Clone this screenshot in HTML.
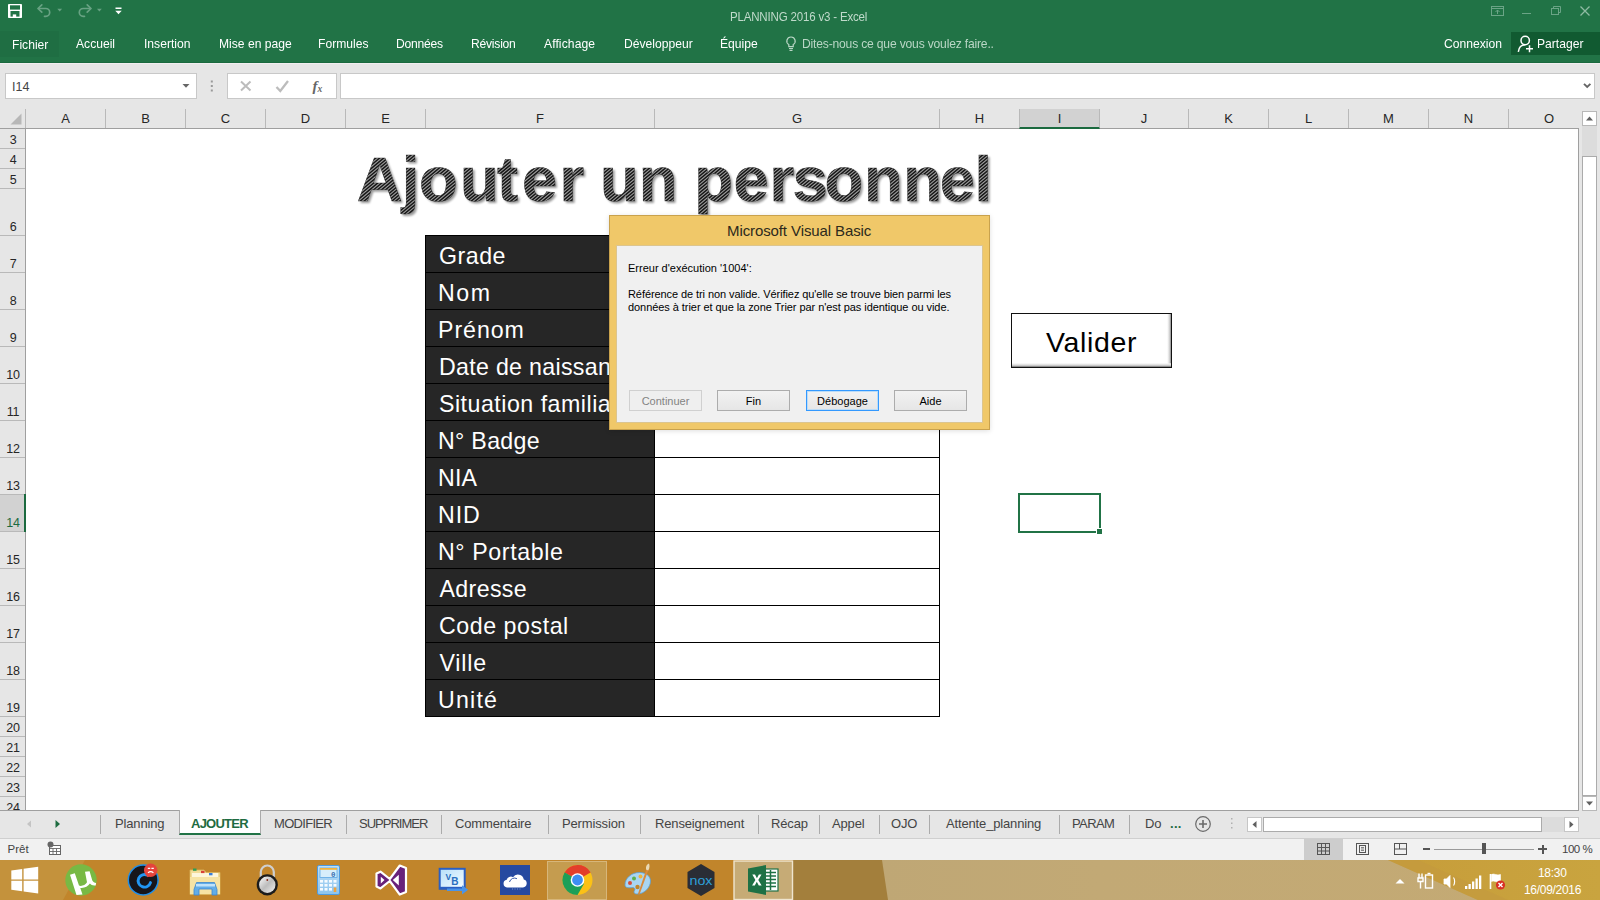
<!DOCTYPE html>
<html lang="fr">
<head>
<meta charset="utf-8">
<title>PLANNING 2016 v3 - Excel</title>
<style>
*{box-sizing:border-box;margin:0;padding:0}
html,body{width:1600px;height:900px;overflow:hidden;background:#fff}
body{position:relative;font-family:"Liberation Sans",sans-serif;font-size:12px;color:#262626}
.abs{position:absolute}
.t{position:absolute;white-space:nowrap;line-height:1}
/* ---------- title / ribbon ---------- */
#green{left:0;top:0;width:1600px;height:63px;background:#217346;border-bottom:1px solid #1b6a3f;z-index:2}
#green .t{color:#fff;font-size:13.1px;letter-spacing:0;transform:scaleX(0.925);transform-origin:0 0}
#title{left:730px;top:11px;color:#c0dacb!important;letter-spacing:-0.4px}
.rt{top:37px}
#fichier{left:0;top:31px;width:59px;height:26px;background:#1f6e43}
#share{left:1511px;top:32px;width:89px;height:23px;background:#115a31}
/* ---------- formula bar ---------- */
#fbar{left:0;top:62px;width:1600px;height:66px;background:#e6e6e6}
.box{position:absolute;background:#fff;border:1px solid #c8c8c8}
/* ---------- headers ---------- */
#colhead{left:0;top:108px;width:1579px;height:21px;border-bottom:1px solid #9f9f9f}
.ch{position:absolute;top:1px;height:19px;border-right:1px solid #b9b9b9;text-align:center;font-size:13px;line-height:19px;color:#262626}
#rowhead{left:0;top:129px;width:26px;height:682px;background:#e6e6e6;border-right:1px solid #9f9f9f;border-bottom:1px solid #9f9f9f;overflow:hidden}
.rh{position:absolute;left:0;width:26px;border-bottom:1px solid #b9b9b9;text-align:center;font-size:12.5px;letter-spacing:-0.3px;color:#262626}
.rh span{position:absolute;left:0;right:0;bottom:1px;line-height:14px;text-align:center}
/* ---------- sheet ---------- */
#sheet{left:26px;top:129px;width:1553px;height:682px;background:#fff;border-right:1px solid #9f9f9f;border-bottom:1px solid #9f9f9f;overflow:hidden}
.lab{position:absolute;left:425px;width:230px;height:38px;background:#262626;border:1px solid #000;color:#fff;font-size:23.2px;line-height:37px;padding:2px 0 0 13px;white-space:nowrap;overflow:hidden;letter-spacing:0.5px}
.val{position:absolute;left:654px;width:286px;height:38px;background:#fff;border:1px solid #000}
/* ---------- dialog ---------- */
#dlg{left:609px;top:215px;width:381px;height:215px;background:#f0c869;border:1px solid #c9a24d;box-shadow:0 1px 5px rgba(0,0,0,.13)}
#dlgin{left:6px;top:29px;width:367px;height:178px;background:#f0f0f0;border:1px solid #dcc58f}
#dlg .t{font-size:11px;color:#000}
.btn{position:absolute;top:144px;width:73px;height:21px;border:1px solid #acacac;background:linear-gradient(#f2f2f2,#e6e6e6);font-size:11px;text-align:center;line-height:19px;padding-top:1px;color:#000}
/* ---------- bottom ---------- */
#tabs{left:0;top:811px;width:1600px;height:28px;background:#e6e6e6;border-bottom:1px solid #cfcfcf}
#tabs .t{font-size:13px;top:6px;color:#444;letter-spacing:-0.15px}
.sep{position:absolute;top:4px;width:1px;height:19px;background:#ababab}
#status{left:0;top:839px;width:1600px;height:21px;background:#f1f1f1}
#task{left:0;top:860px;width:1600px;height:40px;background:#c1842a;overflow:hidden}
</style>
</head>
<body>
<!-- TITLE + RIBBON TABS -->
<div id="green" class="abs">
<!-- quick access toolbar -->
<svg class="abs" style="left:0;top:0" width="260" height="30" viewBox="0 0 260 30">
 <rect x="8" y="4" width="14" height="14" rx="0.800" fill="#fff"/>
 <rect x="10" y="5.300" width="10" height="4.300" fill="#217346"/>
 <rect x="10.500" y="11" width="9" height="5.600" fill="#217346"/>
 <rect x="12.800" y="14.400" width="3.400" height="2.600" fill="#fff"/>
 <g fill="none" stroke="#68a283" stroke-width="1.700" stroke-linecap="round" stroke-linejoin="round">
  <path d="M38.500 8.500h7.300a3.900 3.900 0 0 1 0 7.800h-1.300"/>
  <path d="M41.800 4.800l-3.800 3.700 3.800 3.700"/>
  <path d="M90.500 8.500h-7.300a3.900 3.900 0 0 0 0 7.800h1.300"/>
  <path d="M87.200 4.800l3.800 3.700-3.800 3.700"/>
 </g>
 <path d="M57.300 8.800h4.800l-2.400 2.700z" fill="#68a283"/>
 <path d="M97 8.800h4.800l-2.400 2.700z" fill="#68a283"/>
 <rect x="115.500" y="7.500" width="6" height="1.500" fill="#fff"/>
 <path d="M115.300 10.800h6.400l-3.200 3.400z" fill="#fff"/>
</svg>
<div class="t" id="title" style="font-size:12.800px;letter-spacing:-0.2px;transform:scaleX(0.9)">PLANNING 2016 v3 - Excel</div>
<!-- window controls -->
<svg class="abs" style="left:1485px;top:0" width="115" height="24" viewBox="0 0 115 24">
 <g fill="none" stroke="#6ba486" stroke-width="1">
  <rect x="6.500" y="6.500" width="12" height="9"/>
  <path d="M6.500 8.500h12M12.500 14v-4M10.500 12l2-2 2 2"/>
  <path d="M37 13.500h9"/>
  <rect x="66.500" y="8.500" width="7" height="6"/>
  <path d="M68.500 8.500v-2h7v6h-2"/>
 </g>
 <path d="M95.500 6.500l9 9M104.500 6.500l-9 9" stroke="#8fbba3" stroke-width="1.300" fill="none"/>
</svg>
<!-- ribbon tabs -->
<div id="fichier" class="abs"></div>
<div class="t" style="left:12px;top:38px">Fichier</div>
<div class="t rt" style="left:76px">Accueil</div>
<div class="t rt" style="left:144px">Insertion</div>
<div class="t rt" style="left:219px">Mise en page</div>
<div class="t rt" style="left:318px">Formules</div>
<div class="t rt" style="left:396px;letter-spacing:-0.25px">Données</div>
<div class="t rt" style="left:471px;letter-spacing:-0.25px">Révision</div>
<div class="t rt" style="left:544px;letter-spacing:0.1px">Affichage</div>
<div class="t rt" style="left:624px">Développeur</div>
<div class="t rt" style="left:720px">Équipe</div>
<svg class="abs" style="left:784px;top:35px" width="14" height="18" viewBox="0 0 14 18">
 <path d="M7 2a4.100 4.100 0 0 1 2.200 7.600v2.100H4.800V9.600A4.100 4.100 0 0 1 7 2z" fill="none" stroke="#b9d6c5" stroke-width="1.200"/>
 <path d="M5 13.500h4M5.500 15.300h3" stroke="#b9d6c5" stroke-width="1.200"/>
</svg>
<div class="t rt" style="left:802px;color:#b9d6c5;letter-spacing:-0.2px">Dites-nous ce que vous voulez faire..</div>
<div class="t rt" style="left:1444px">Connexion</div>
<div id="share" class="abs"></div>
<svg class="abs" style="left:1516px;top:33px" width="20" height="22" viewBox="0 0 20 22">
 <g fill="none" stroke="#fff" stroke-width="1.500">
  <circle cx="9.200" cy="7.500" r="4.200"/>
  <path d="M2.300 18.800c.6-4.600 3.400-7.100 6.900-7.100"/>
  <path d="M10 15.800h7M13.500 12.300v7"/>
 </g>
</svg>
<div class="t rt" style="left:1537px">Partager</div>
</div>
<!-- FORMULA BAR -->
<div id="fbar" class="abs">
<div class="abs" style="left:0;top:1px;width:1600px;height:1px;background:#f2eef0"></div>
<div class="box" style="left:5px;top:11px;width:192px;height:26px"></div>
<div class="t" style="left:12px;top:19px;font-size:12.500px;color:#444">I14</div>
<svg class="abs" style="left:180px;top:20px" width="12" height="8" viewBox="0 0 12 8"><path d="M2.500 2h7L6 5.800z" fill="#666"/></svg>
<svg class="abs" style="left:208px;top:17px" width="6" height="16" viewBox="0 0 6 16"><g fill="#9a9a9a"><rect x="2.800" y="1.500" width="2" height="2"/><rect x="2.800" y="6" width="2" height="2"/><rect x="2.800" y="10.500" width="2" height="2"/></g></svg>
<div class="box" style="left:227px;top:11px;width:110px;height:26px"></div>
<svg class="abs" style="left:227px;top:11px" width="110" height="26" viewBox="0 0 110 26">
 <path d="M14 8.500l9.500 9M23.500 8.500l-9.500 9" stroke="#bcbcbc" stroke-width="2" fill="none"/>
 <path d="M49.500 14l3.800 4 7.700-10" stroke="#bcbcbc" stroke-width="2.300" fill="none"/>
 <text x="85.500" y="18" font-family="Liberation Serif,serif" font-style="italic" font-weight="bold" font-size="15" fill="#666">f</text>
 <text x="90.500" y="18.500" font-family="Liberation Serif,serif" font-style="italic" font-weight="bold" font-size="9.500" fill="#666">x</text>
</svg>
<div class="box" style="left:340px;top:11px;width:1255px;height:26px"></div>
<svg class="abs" style="left:1580.500px;top:19px" width="12" height="10" viewBox="0 0 12 10"><path d="M3 2.800l3.200 3.200 3.200-3.200" stroke="#666" stroke-width="1.900" fill="none"/></svg>
</div>
<div id="colhead" class="abs">
<svg class="abs" style="left:9px;top:4px" width="14" height="14" viewBox="0 0 14 14"><path d="M12.500 1.500v11h-11z" fill="#b7b7b7"/></svg>
<div class="ch" style="left:0;width:26px"></div>
<div class="ch" style="left:26px;width:80px">A</div>
<div class="ch" style="left:106px;width:80px">B</div>
<div class="ch" style="left:186px;width:80px">C</div>
<div class="ch" style="left:266px;width:80px">D</div>
<div class="ch" style="left:346px;width:80px">E</div>
<div class="ch" style="left:426px;width:229px">F</div>
<div class="ch" style="left:655px;width:285px">G</div>
<div class="ch" style="left:940px;width:80px">H</div>
<div class="ch" style="left:1019px;width:81px;background:#d2d2d2;border-bottom:2px solid #1b6a3f;height:20px;border-left:1px solid #b9b9b9">I</div>
<div class="ch" style="left:1100px;width:89px">J</div>
<div class="ch" style="left:1189px;width:80px">K</div>
<div class="ch" style="left:1269px;width:80px">L</div>
<div class="ch" style="left:1349px;width:80px">M</div>
<div class="ch" style="left:1429px;width:80px">N</div>
<div class="ch" style="left:1509px;width:80px;border-right:none">O</div>
</div>
<div id="rowhead" class="abs">
<div class="rh" style="top:0px;height:20px"><span>3</span></div>
<div class="rh" style="top:20px;height:20px"><span>4</span></div>
<div class="rh" style="top:40px;height:20px"><span>5</span></div>
<div class="rh" style="top:60px;height:47px"><span>6</span></div>
<div class="rh" style="top:107px;height:37px"><span>7</span></div>
<div class="rh" style="top:144px;height:37px"><span>8</span></div>
<div class="rh" style="top:181px;height:37px"><span>9</span></div>
<div class="rh" style="top:218px;height:37px"><span>10</span></div>
<div class="rh" style="top:255px;height:37px"><span>11</span></div>
<div class="rh" style="top:292px;height:37px"><span>12</span></div>
<div class="rh" style="top:329px;height:37px"><span>13</span></div>
<div class="rh" style="top:366px;height:37px;background:#d2d2d2;color:#1b6a3f"><span>14</span></div>
<div class="rh" style="top:403px;height:37px"><span>15</span></div>
<div class="rh" style="top:440px;height:37px"><span>16</span></div>
<div class="rh" style="top:477px;height:37px"><span>17</span></div>
<div class="rh" style="top:514px;height:37px"><span>18</span></div>
<div class="rh" style="top:551px;height:37px"><span>19</span></div>
<div class="rh" style="top:588px;height:20px"><span>20</span></div>
<div class="rh" style="top:608px;height:20px"><span>21</span></div>
<div class="rh" style="top:628px;height:20px"><span>22</span></div>
<div class="rh" style="top:648px;height:20px"><span>23</span></div>
<div class="rh" style="top:668px;height:20px"><span>24</span></div>
</div>
<div class="abs" style="left:24px;top:494px;width:2px;height:38px;background:#1b6a3f;z-index:3"></div>
<!-- SHEET -->
<div id="sheet" class="abs">
<svg class="abs" style="left:302px;top:-1px" width="700" height="100" viewBox="0 0 700 100">
 <defs>
  <filter id="sh" x="-5%" y="-20%" width="110%" height="150%"><feGaussianBlur stdDeviation="1.300"/></filter>
  <clipPath id="tclip"><text x="28.7 73.8 90.9 132.0 169.1 194.1 231.6 255.2 272.0 310.8 348.9 366.3 405.6 441.6 464.6 496.6 535.9 575.2 611.8 646.6" y="73" font-family="Liberation Sans,sans-serif" font-weight="bold" font-size="63.5">Ajouter un personnel</text></clipPath>
 </defs>
 <text x="28.7 73.8 90.9 132.0 169.1 194.1 231.6 255.2 272.0 310.8 348.9 366.3 405.6 441.6 464.6 496.6 535.9 575.2 611.8 646.6" y="73" font-family="Liberation Sans,sans-serif" font-weight="bold" font-size="63.5" fill="#000" opacity="0.400" filter="url(#sh)" transform="translate(2,2.300)">Ajouter un personnel</text>
 <text x="28.7 73.8 90.9 132.0 169.1 194.1 231.6 255.2 272.0 310.8 348.9 366.3 405.6 441.6 464.6 496.6 535.9 575.2 611.8 646.6" y="73" font-family="Liberation Sans,sans-serif" font-weight="bold" font-size="63.5" fill="#9c9c9c" stroke="#4a4a4a" stroke-width="0.500">Ajouter un personnel</text>
 <g clip-path="url(#tclip)"><path d="M20 20.0l650 -545.4M20 23.3l650 -545.4M20 26.7l650 -545.4M20 30.0l650 -545.4M20 33.3l650 -545.4M20 36.6l650 -545.4M20 40.0l650 -545.4M20 43.3l650 -545.4M20 46.6l650 -545.4M20 50.0l650 -545.4M20 53.3l650 -545.4M20 56.6l650 -545.4M20 60.0l650 -545.4M20 63.3l650 -545.4M20 66.6l650 -545.4M20 69.9l650 -545.4M20 73.3l650 -545.4M20 76.6l650 -545.4M20 79.9l650 -545.4M20 83.3l650 -545.4M20 86.6l650 -545.4M20 89.9l650 -545.4M20 93.3l650 -545.4M20 96.6l650 -545.4M20 99.9l650 -545.4M20 103.2l650 -545.4M20 106.6l650 -545.4M20 109.9l650 -545.4M20 113.2l650 -545.4M20 116.6l650 -545.4M20 119.9l650 -545.4M20 123.2l650 -545.4M20 126.6l650 -545.4M20 129.9l650 -545.4M20 133.2l650 -545.4M20 136.5l650 -545.4M20 139.9l650 -545.4M20 143.2l650 -545.4M20 146.5l650 -545.4M20 149.9l650 -545.4M20 153.2l650 -545.4M20 156.5l650 -545.4M20 159.9l650 -545.4M20 163.2l650 -545.4M20 166.5l650 -545.4M20 169.9l650 -545.4M20 173.2l650 -545.4M20 176.5l650 -545.4M20 179.8l650 -545.4M20 183.2l650 -545.4M20 186.5l650 -545.4M20 189.8l650 -545.4M20 193.2l650 -545.4M20 196.5l650 -545.4M20 199.8l650 -545.4M20 203.2l650 -545.4M20 206.5l650 -545.4M20 209.8l650 -545.4M20 213.1l650 -545.4M20 216.5l650 -545.4M20 219.8l650 -545.4M20 223.1l650 -545.4M20 226.5l650 -545.4M20 229.8l650 -545.4M20 233.1l650 -545.4M20 236.5l650 -545.4M20 239.8l650 -545.4M20 243.1l650 -545.4M20 246.4l650 -545.4M20 249.8l650 -545.4M20 253.1l650 -545.4M20 256.4l650 -545.4M20 259.8l650 -545.4M20 263.1l650 -545.4M20 266.4l650 -545.4M20 269.8l650 -545.4M20 273.1l650 -545.4M20 276.4l650 -545.4M20 279.7l650 -545.4M20 283.1l650 -545.4M20 286.4l650 -545.4M20 289.7l650 -545.4M20 293.1l650 -545.4M20 296.4l650 -545.4M20 299.7l650 -545.4M20 303.1l650 -545.4M20 306.4l650 -545.4M20 309.7l650 -545.4M20 313.0l650 -545.4M20 316.4l650 -545.4M20 319.7l650 -545.4M20 323.0l650 -545.4M20 326.4l650 -545.4M20 329.7l650 -545.4M20 333.0l650 -545.4M20 336.4l650 -545.4M20 339.7l650 -545.4M20 343.0l650 -545.4M20 346.3l650 -545.4M20 349.7l650 -545.4M20 353.0l650 -545.4M20 356.3l650 -545.4M20 359.7l650 -545.4M20 363.0l650 -545.4M20 366.3l650 -545.4M20 369.6l650 -545.4M20 373.0l650 -545.4M20 376.3l650 -545.4M20 379.6l650 -545.4M20 383.0l650 -545.4M20 386.3l650 -545.4M20 389.6l650 -545.4M20 393.0l650 -545.4M20 396.3l650 -545.4M20 399.6l650 -545.4M20 402.9l650 -545.4M20 406.3l650 -545.4M20 409.6l650 -545.4M20 412.9l650 -545.4M20 416.3l650 -545.4M20 419.6l650 -545.4M20 422.9l650 -545.4M20 426.3l650 -545.4M20 429.6l650 -545.4M20 432.9l650 -545.4M20 436.2l650 -545.4M20 439.6l650 -545.4M20 442.9l650 -545.4M20 446.2l650 -545.4M20 449.6l650 -545.4M20 452.9l650 -545.4M20 456.2l650 -545.4M20 459.6l650 -545.4M20 462.9l650 -545.4M20 466.2l650 -545.4M20 469.5l650 -545.4M20 472.9l650 -545.4M20 476.2l650 -545.4M20 479.5l650 -545.4M20 482.9l650 -545.4M20 486.2l650 -545.4M20 489.5l650 -545.4M20 492.9l650 -545.4M20 496.2l650 -545.4M20 499.5l650 -545.4M20 502.8l650 -545.4M20 506.2l650 -545.4M20 509.5l650 -545.4M20 512.8l650 -545.4M20 516.2l650 -545.4M20 519.5l650 -545.4M20 522.8l650 -545.4M20 526.2l650 -545.4M20 529.5l650 -545.4M20 532.8l650 -545.4M20 536.1l650 -545.4M20 539.5l650 -545.4M20 542.8l650 -545.4M20 546.1l650 -545.4M20 549.5l650 -545.4M20 552.8l650 -545.4M20 556.1l650 -545.4M20 559.5l650 -545.4M20 562.8l650 -545.4M20 566.1l650 -545.4M20 569.4l650 -545.4M20 572.8l650 -545.4M20 576.1l650 -545.4M20 579.4l650 -545.4M20 582.8l650 -545.4M20 586.1l650 -545.4M20 589.4l650 -545.4M20 592.8l650 -545.4M20 596.1l650 -545.4M20 599.4l650 -545.4M20 602.8l650 -545.4M20 606.1l650 -545.4M20 609.4l650 -545.4M20 612.7l650 -545.4M20 616.1l650 -545.4M20 619.4l650 -545.4M20 622.7l650 -545.4M20 626.1l650 -545.4M20 629.4l650 -545.4M20 632.7l650 -545.4M20 636.1l650 -545.4M20 639.4l650 -545.4M20 642.7l650 -545.4" stroke="#161616" stroke-width="1.450" fill="none"/></g>
</svg>
<div class="lab" style="left:399px;top:106px">Grade</div><div class="val" style="left:628px;top:106px"></div>
<div class="lab" style="left:399px;top:143px;letter-spacing:1.6px;padding-left:12px">Nom</div><div class="val" style="left:628px;top:143px"></div>
<div class="lab" style="left:399px;top:180px;letter-spacing:0.95px;padding-left:12px">Prénom</div><div class="val" style="left:628px;top:180px"></div>
<div class="lab" style="left:399px;top:217px;letter-spacing:0.3px">Date de naissance</div><div class="val" style="left:628px;top:217px"></div>
<div class="lab" style="left:399px;top:254px">Situation familiale</div><div class="val" style="left:628px;top:254px"></div>
<div class="lab" style="left:399px;top:291px;letter-spacing:0.3px;padding-left:12px">N° Badge</div><div class="val" style="left:628px;top:291px"></div>
<div class="lab" style="left:399px;top:328px;letter-spacing:0.2px;padding-left:12px">NIA</div><div class="val" style="left:628px;top:328px"></div>
<div class="lab" style="left:399px;top:365px;letter-spacing:0.9px;padding-left:12px">NID</div><div class="val" style="left:628px;top:365px"></div>
<div class="lab" style="left:399px;top:402px;letter-spacing:0.6px;padding-left:12px">N° Portable</div><div class="val" style="left:628px;top:402px"></div>
<div class="lab" style="left:399px;top:439px;letter-spacing:0.35px;padding-left:13.5px">Adresse</div><div class="val" style="left:628px;top:439px"></div>
<div class="lab" style="left:399px;top:476px;letter-spacing:0.55px;padding-left:13px">Code postal</div><div class="val" style="left:628px;top:476px"></div>
<div class="lab" style="left:399px;top:513px;letter-spacing:0.8px;padding-left:13.5px">Ville</div><div class="val" style="left:628px;top:513px"></div>
<div class="lab" style="left:399px;top:550px;letter-spacing:1.2px;padding-left:12px">Unité</div><div class="val" style="left:628px;top:550px"></div>
<div class="abs" style="left:985px;top:184px;width:161px;height:55px;border:1.500px solid #111;background:linear-gradient(to top,#6f6f6f 0,#c9c9c9 1.500px,#f1f1f1 3px,rgba(255,255,255,0) 4.500px),linear-gradient(to left,#8a8a8a 0,#d2d2d2 1.500px,#f4f4f4 3px,rgba(255,255,255,0) 4px),#fff"></div>
<div class="t" style="left:1020px;top:199px;font-size:28.500px;color:#000;letter-spacing:0.65px">Valider</div>
<div class="abs" style="left:992px;top:364px;width:83px;height:40px;border:2px solid #217346"></div>
<div class="abs" style="left:1070px;top:399px;width:7px;height:7px;background:#217346;border:1px solid #fff"></div>
</div>
<!-- VBA ERROR DIALOG -->
<div id="dlg" class="abs">
<div class="t" style="left:117px;top:7px;font-size:15px;color:#2d2a1c;letter-spacing:-0.1px">Microsoft Visual Basic</div>
<div id="dlgin" class="abs">
<div class="t" style="left:11px;top:17px">Erreur d'exécution '1004':</div>
<div class="t" style="left:11px;top:43px;letter-spacing:-0.08px">Référence de tri non valide. Vérifiez qu'elle se trouve bien parmi les</div>
<div class="t" style="left:11px;top:56px;letter-spacing:-0.06px">données à trier et que la zone Trier par n'est pas identique ou vide.</div>
<div class="btn" style="left:12px;color:#838383;border-color:#d0d0d0;background:#efefef">Continuer</div>
<div class="btn" style="left:100px">Fin</div>
<div class="btn" style="left:189px;border-color:#3399ff;box-shadow:inset 0 0 0 1px #bcdcf7">Débogage</div>
<div class="btn" style="left:277px">Aide</div>
</div>
</div>
<!-- vertical scrollbar -->
<div class="abs" style="left:1579px;top:108px;width:21px;height:703px;background:#e6e6e6"></div>
<div class="box" style="left:1582px;top:111px;width:15px;height:15px;border-color:#b8b8b8"></div>
<div class="abs" style="left:1582px;top:126px;width:15px;height:30px;background:#dcdcdc"></div>
<div class="box" style="left:1582px;top:156px;width:15px;height:640px;border-color:#ababab"></div>
<div class="box" style="left:1582px;top:796px;width:15px;height:15px;border-color:#b8b8b8"></div>
<svg class="abs" style="left:1582px;top:111px" width="15" height="700" viewBox="0 0 15 700"><path d="M4 9.500h7L7.500 5.500z" fill="#606060"/><path d="M4 690.500h7l-3.500 4z" fill="#606060"/></svg>
<!-- TABS / STATUS / TASKBAR -->
<div id="tabs" class="abs">
<svg class="abs" style="left:20px;top:5px" width="50" height="16" viewBox="0 0 50 16">
 <path d="M11 4.500v7L7 8z" fill="#c4c4c4"/><path d="M35.500 4v8l4.500-4z" fill="#1e6c41"/>
</svg>
<div class="sep" style="left:100px"></div>
<div class="t" style="left:115px">Planning</div>
<div class="abs" style="left:179px;top:-1px;width:82px;height:25px;background:#fff;border:1px solid #ababab;border-top:none;border-bottom:2px solid #217346"></div>
<div class="t" style="left:191px;font-weight:bold;color:#1e6c41;letter-spacing:-0.75px">AJOUTER</div>
<div class="t" style="left:274px;letter-spacing:-0.7px">MODIFIER</div>
<div class="sep" style="left:346px"></div>
<div class="t" style="left:359px;letter-spacing:-1px">SUPPRIMER</div>
<div class="sep" style="left:441px"></div>
<div class="t" style="left:455px">Commentaire</div>
<div class="sep" style="left:548px"></div>
<div class="t" style="left:562px">Permission</div>
<div class="sep" style="left:640px"></div>
<div class="t" style="left:655px">Renseignement</div>
<div class="sep" style="left:758px"></div>
<div class="t" style="left:771px">Récap</div>
<div class="sep" style="left:819px"></div>
<div class="t" style="left:832px">Appel</div>
<div class="sep" style="left:879px"></div>
<div class="t" style="left:891px">OJO</div>
<div class="sep" style="left:929px"></div>
<div class="t" style="left:946px">Attente_planning</div>
<div class="sep" style="left:1059px"></div>
<div class="t" style="left:1072px;letter-spacing:-0.6px">PARAM</div>
<div class="sep" style="left:1129px"></div>
<div class="t" style="left:1145px">Do</div>
<div class="t" style="left:1170px;font-weight:bold;color:#1e6c41;letter-spacing:0.3px">...</div>
<svg class="abs" style="left:1194px;top:4px" width="18" height="18" viewBox="0 0 18 18"><circle cx="9" cy="9" r="7.300" fill="none" stroke="#6a6a6a" stroke-width="1.200"/><path d="M5 9h8M9 5v8" stroke="#6a6a6a" stroke-width="1.600"/></svg>
<svg class="abs" style="left:1229px;top:5px" width="6" height="16" viewBox="0 0 6 16"><g fill="#b0b0b0"><rect x="2" y="2" width="1.500" height="1.500"/><rect x="2" y="6.500" width="1.500" height="1.500"/><rect x="2" y="11" width="1.500" height="1.500"/></g></svg>
<!-- horizontal scrollbar -->
<div class="box" style="left:1247px;top:6px;width:15px;height:15px;border-color:#c6c6c6"></div>
<div class="box" style="left:1263px;top:6px;width:279px;height:15px;border-color:#ababab"></div>
<div class="abs" style="left:1542px;top:6px;width:22px;height:15px;background:#dcdcdc"></div>
<div class="box" style="left:1564px;top:6px;width:15px;height:15px;border-color:#c6c6c6"></div>
<svg class="abs" style="left:1247px;top:6px" width="332" height="15" viewBox="0 0 332 15"><path d="M9.500 4v7L5.500 7.500z" fill="#606060"/><path d="M322.500 4v7l4-3.500z" fill="#606060"/></svg>
</div>
<div id="status" class="abs">
<div class="t" style="left:7.500px;top:5px;font-size:11.500px;color:#444">Prêt</div>
<svg class="abs" style="left:46px;top:1px" width="17" height="17" viewBox="0 0 17 17">
 <rect x="3.500" y="5.500" width="11" height="9" fill="#fff" stroke="#666" stroke-width="1"/>
 <path d="M3.500 8.500h11M7 8.500v6M10.500 8.500v6M3.500 11.500h11" stroke="#666" stroke-width="0.900" fill="none"/>
 <circle cx="4.500" cy="4.500" r="3" fill="#666"/>
</svg>
<!-- view buttons -->
<div class="abs" style="left:1304px;top:0;width:39px;height:21px;background:#cdcdcd"></div>
<svg class="abs" style="left:1304px;top:0" width="115" height="21" viewBox="0 0 115 21">
 <g fill="none" stroke="#555" stroke-width="1">
  <rect x="13.500" y="4.500" width="12" height="11"/><path d="M13.500 8.500h12M13.500 12h12M17.500 4.500v11M21.500 4.500v11"/>
  <rect x="52.500" y="4.500" width="12" height="11"/><rect x="55.500" y="6.500" width="6" height="7"/><path d="M57 8.500h3M57 10h3M57 11.500h3" stroke-width="0.700"/>
  <rect x="90.500" y="4.500" width="12" height="11"/><path d="M95.500 4.500v5.500M90.500 10h12" />
 </g>
</svg>
<!-- zoom slider -->
<div class="abs" style="left:1423px;top:9px;width:7px;height:2px;background:#555"></div>
<div class="abs" style="left:1434px;top:9.500px;width:100px;height:1px;background:#9a9a9a"></div>
<div class="abs" style="left:1482px;top:4px;width:4px;height:11px;background:#555"></div>
<div class="abs" style="left:1538px;top:9px;width:9px;height:2px;background:#555"></div>
<div class="abs" style="left:1541.500px;top:5.500px;width:2px;height:9px;background:#555"></div>
<div class="t" style="left:1562px;top:4.500px;font-size:11.500px;color:#444;letter-spacing:-0.5px">100 %</div>
</div>
<div id="task" class="abs">
<svg class="abs" style="left:0;top:0" width="1600" height="40" viewBox="0 0 1600 40">
 <defs>
  <linearGradient id="tan" x1="0" x2="1" y1="0" y2="0"><stop offset="0" stop-color="#bfa775"/><stop offset="0.300" stop-color="#c2a975"/><stop offset="1" stop-color="#c4aa74"/></linearGradient>
  <linearGradient id="gold" x1="0" x2="1" y1="0" y2="0"><stop offset="0" stop-color="#c79d3a"/><stop offset="1" stop-color="#c9a43f"/></linearGradient>
  <linearGradient id="silver" x1="0" x2="1" y1="0" y2="1"><stop offset="0" stop-color="#fdfdfd"/><stop offset="0.500" stop-color="#bdbdbd"/><stop offset="1" stop-color="#f2f2f2"/></linearGradient>
  <linearGradient id="calc" x1="0" x2="0" y1="0" y2="1"><stop offset="0" stop-color="#bfe0f7"/><stop offset="1" stop-color="#8cc4ee"/></linearGradient>
  <linearGradient id="vbg" x1="0" x2="1" y1="0" y2="1"><stop offset="0" stop-color="#b9e0fa"/><stop offset="1" stop-color="#f2fbff"/></linearGradient>
 </defs>
 <rect width="1600" height="40" fill="#c1852b"/>
 <path d="M0 0h85l-22 40H0z" fill="#c4923c"/>
 <path d="M792 0h91l6 40h-97z" fill="#a37f3c"/>
 <path d="M882 0h720v40H888z" fill="url(#tan)"/>
 <path d="M1388 0h212v40h-122z" fill="url(#gold)"/>
 <path d="M1388 0h30l90 40h-30z" fill="#c39a40" opacity="0.600"/>
 <!-- running-app highlights -->
 <rect x="547.500" y="1.500" width="59" height="38" fill="#c59c4f" stroke="#d7b67a" stroke-width="1"/>
 <rect x="734" y="1" width="58.500" height="38.500" fill="#c6ab76" stroke="#efe5cf" stroke-width="1.400"/>
 <!-- start -->
 <g fill="#fff" transform="translate(0,0.700)">
  <path d="M11.300 9.700l10.900-1.500v10.500H11.300z"/><path d="M23.600 8l14.600-2v12.700H23.600z"/>
  <path d="M11.300 20.100h10.900v10.400l-10.900-1.500z"/><path d="M23.600 20.100h14.600v12.700l-14.600-2z"/>
 </g>
 <!-- uTorrent -->
 <circle cx="81" cy="20" r="15.700" fill="#78b944"/>
 <path d="M70 14.800l4.800-1.500 4.200 12.300c2.500 1 6.500-.5 8-3.300L85 11.800l4.600-.6 2.700 9.400c.8 1.700 2.300 2.300 3.800 2.300l-.4 2.500c-2.500.5-4.600-.3-5.800-1.800-2 3.200-5.800 4.800-9.600 4.300l2.200 6.600-6 .4z" fill="#fff"/>
 <!-- IObit -->
 <circle cx="143.200" cy="20" r="14.900" fill="#17161b" stroke="#1f8fea" stroke-width="1.500"/>
 <path d="M147.500 15.300a6.300 6.300 0 1 0 3 7.300" fill="none" stroke="#2196f3" stroke-width="2.900" stroke-linecap="round"/>
 <circle cx="150.700" cy="10.300" r="6.700" fill="#e5443c"/><path d="M145.500 14l2 3.200 3.500-1.500z" fill="#e5443c"/>
 <path d="M148 12.800c1.600-1.600 3.800-1.600 5.400 0" stroke="#fff" stroke-width="1.200" fill="none"/><path d="M147.800 8.300h2.400M151.400 8.300h2.400" stroke="#fff" stroke-width="1.300"/>
 <!-- Explorer -->
 <path d="M190 10h14l2 2.500h14v22h-30z" fill="#f2dc98" stroke="#d9b45c" stroke-width="0.800"/>
 <path d="M192 13h26v4h-26z" fill="#fdf6dc"/>
 <path d="M190 17h30v17h-30z" fill="#f6e3a4"/>
 <rect x="193" y="8.500" width="3.500" height="2.300" fill="#2f9e57"/><rect x="201" y="10.800" width="3.500" height="2.300" fill="#d9403a"/><rect x="209" y="13" width="3.500" height="2.300" fill="#3b7fd9"/>
 <path d="M194 29.500l2.500-7h18l2.500 7v5.500h-5v-6h-13v6h-5z" fill="#62ade8" stroke="#3c86cf" stroke-width="0.800"/>
 <path d="M196 24h19v2.500h-19z" fill="#bfe2fa"/>
 <!-- lock -->
 <path d="M260.800 19v-7a6.500 6.500 0 0 1 13 0v7" fill="none" stroke="#cfcfcf" stroke-width="2.200"/>
 <circle cx="267.300" cy="24.800" r="10.600" fill="#1c1c1c"/><circle cx="267.300" cy="24.800" r="8.200" fill="url(#silver)"/><circle cx="267.300" cy="20" r="0.900" fill="#8a2a1a"/>
 <!-- calculator -->
 <rect x="317.500" y="5.500" width="22" height="29" rx="1.500" fill="url(#calc)" stroke="#4d9be0" stroke-width="1"/>
 <rect x="320" y="8" width="17" height="9.500" fill="#d7eefb" stroke="#5ea8e4" stroke-width="0.800"/><rect x="320" y="8" width="17" height="1.800" fill="#f1b23b"/>
 <text x="331" y="16.500" font-family="Liberation Mono,monospace" font-size="7.500" font-weight="bold" fill="#3a6fae">0</text>
 <g fill="#f5fbff"><rect x="320" y="20" width="3" height="2.600"/><rect x="324.500" y="20" width="3" height="2.600"/><rect x="329" y="20" width="3" height="2.600"/><rect x="333.500" y="20" width="3" height="2.600"/><rect x="320" y="24" width="3" height="2.600"/><rect x="324.500" y="24" width="3" height="2.600"/><rect x="329" y="24" width="3" height="2.600"/><rect x="333.500" y="24" width="3" height="2.600"/><rect x="320" y="28" width="3" height="2.600"/><rect x="324.500" y="28" width="3" height="2.600"/><rect x="329" y="28" width="3" height="2.600"/></g>
 <rect x="333.700" y="27.500" width="2.600" height="4.500" fill="#f1a33b"/>
 <!-- Visual Studio -->
 <path d="M376.500 13.500l4-1.800 9.300 7.300 10-13.500 6.200 2.500v24l-6.200 2.600-10-13.600-9.300 7.400-4-1.900z" fill="#68217a" stroke="#fff" stroke-width="2.200" stroke-linejoin="round"/>
 <path d="M380.800 16.800v6.600l3.700-3.300zM398.800 14.800l-6 5.300 6 5.300z" fill="#fff"/>
 <!-- VB -->
 <rect x="438.700" y="7.800" width="27" height="22" fill="#2a5fc2"/><rect x="440.700" y="9.800" width="23" height="17" fill="url(#vbg)"/>
 <text x="445.500" y="19.700" font-family="Liberation Sans,sans-serif" font-weight="bold" font-size="8.500" fill="#2a6fc0">V</text>
 <text x="451.300" y="25.200" font-family="Liberation Sans,sans-serif" font-weight="bold" font-size="10" fill="#2a6fc0">B</text>
 <path d="M447 28.500h15v-3.300l6.200 4.600-6.200 4.600v-3.300H447z" fill="#4a94e8"/>
 <!-- OneDrive -->
 <rect x="500" y="5" width="30" height="30" fill="#2549a0"/>
 <path d="M507 27.500a3.900 3.900 0 0 1-.3-7.700 4.300 4.300 0 0 1 6.300-2.600 6 6 0 0 1 10.800 2.300 4.100 4.100 0 0 1-.8 8z" fill="#fff"/>
 <path d="M509.500 22a5.200 5.200 0 0 1 7.500-3.300" fill="none" stroke="#2549a0" stroke-width="0.900"/>
 <path d="M512 29h10" stroke="#9fb3df" stroke-width="0.700" stroke-dasharray="1 1.500" fill="none"/>
 <!-- Chrome -->
 <circle cx="577.500" cy="20" r="15" fill="#fbc116"/>
 <path d="M577.500 20L564.500 12.500A15 15 0 0 1 590.500 12.500z" fill="#e33e2b"/>
 <path d="M577.500 5a15 15 0 0 1 13 7.500h-13z" fill="#e33e2b"/>
 <path d="M564.500 12.500A15 15 0 0 0 577.500 35l6.500-11.200-6.500-3.800z" fill="#1d9f58"/>
 <path d="M564.500 12.500l6.500 11.300 6.500-3.800z" fill="#1d9f58"/>
 <circle cx="577.500" cy="20" r="6.800" fill="#fff"/><circle cx="577.500" cy="20" r="5.400" fill="#3e8ef2"/>
 <!-- Paint -->
 <path d="M625 25c0-7 6.500-12.500 14.500-12.500 6.500 0 11 3.500 11 8.500 0 6.500-6 13-13.500 13-3 0-3.500-2-2.500-3.500 1-1.600 0-3-2-3-3.500.5-7.500.5-7.500-2.500z" fill="#a9d5f2" stroke="#5a9fd6" stroke-width="0.800"/>
 <circle cx="630" cy="23" r="2" fill="#d94c3a"/><circle cx="634" cy="18.500" r="2" fill="#5fb04a"/><circle cx="640.500" cy="16.500" r="2" fill="#f0b43c"/><circle cx="637.500" cy="27" r="2.200" fill="#c1852b"/>
 <path d="M646.500 9l2 .8-9 24.700-1.600-.6z" fill="#d98a3c"/><path d="M646 9.500c-.5-3 1-5.500 3-6 .8 2 .8 4.500-.8 7z" fill="#e9d9b5"/>
 <!-- Nox -->
 <path d="M701 4l13.500 8v16L701 36l-13.500-8V12z" fill="#2a2d35"/>
 <text x="701" y="25" text-anchor="middle" font-family="Liberation Sans,sans-serif" font-size="12.500" fill="#2e9fd8" textLength="23" lengthAdjust="spacingAndGlyphs">nox</text>
 <!-- Excel -->
 <rect x="762" y="9" width="16" height="22" fill="#fff" stroke="#1e7145" stroke-width="1.200"/>
 <path d="M766 12.500h10M766 16h10M766 19.500h10M766 23h10M766 26.500h10M770.500 10v20" stroke="#1e7145" stroke-width="1.500" fill="none"/>
 <path d="M748 8.500l18-3.500v30l-18-3.500z" fill="#1e7145"/>
 <path d="M752.300 14.500h2.700l1.900 3.700 2-3.700h2.600l-3.200 5.500 3.300 5.500h-2.800l-2-3.800-2 3.800h-2.700l3.300-5.500z" fill="#fff"/>
 <!-- tray -->
 <path d="M1395.500 23.500h9l-4.500-4.500z" fill="#fff"/>
 <g fill="none" stroke="#fff" stroke-width="1.400" transform="translate(0,1)">
  <rect x="1425.500" y="14" width="7" height="13"/><path d="M1427.500 12.500h3"/>
  <path d="M1419 12.500v4M1422 12.500v4M1418 17h5v3.500h-5zM1420.500 20.500v7"/>
  <path d="M1444 18h2.500l3.500-3.500v12l-3.500-3.500H1444z" fill="#fff" stroke-width="0.800"/>
  <path d="M1453.500 16.500c1.500 2 1.500 6 0 8" stroke-width="1.200"/>
  <path d="M1490.500 13v15" stroke-width="1.600"/>
  <path d="M1491.500 13.500c3-1.500 5 1.500 9 0v7c-4 1.500-6-1.500-9 0z" fill="#fff" stroke-width="0.600"/>
 </g>
 <g fill="#fff" transform="translate(0,1)"><rect x="1465" y="25" width="2.300" height="3"/><rect x="1468.500" y="23" width="2.300" height="5"/><rect x="1472" y="20.500" width="2.300" height="7.500"/><rect x="1475.500" y="17.500" width="2.300" height="10.500"/><rect x="1479" y="14.500" width="2.300" height="13.500"/></g>
 <circle cx="1500.500" cy="25" r="4.600" fill="#d93025"/><path d="M1498.500 23l4 4M1502.500 23l-4 4" stroke="#fff" stroke-width="1.400"/>
</svg>
<div class="t" style="left:1538px;top:7px;font-size:12px;color:#fff;letter-spacing:-0.3px">18:30</div>
<div class="t" style="left:1524px;top:24px;font-size:12px;color:#fff;letter-spacing:-0.3px">16/09/2016</div>
</div>
</body>
</html>
